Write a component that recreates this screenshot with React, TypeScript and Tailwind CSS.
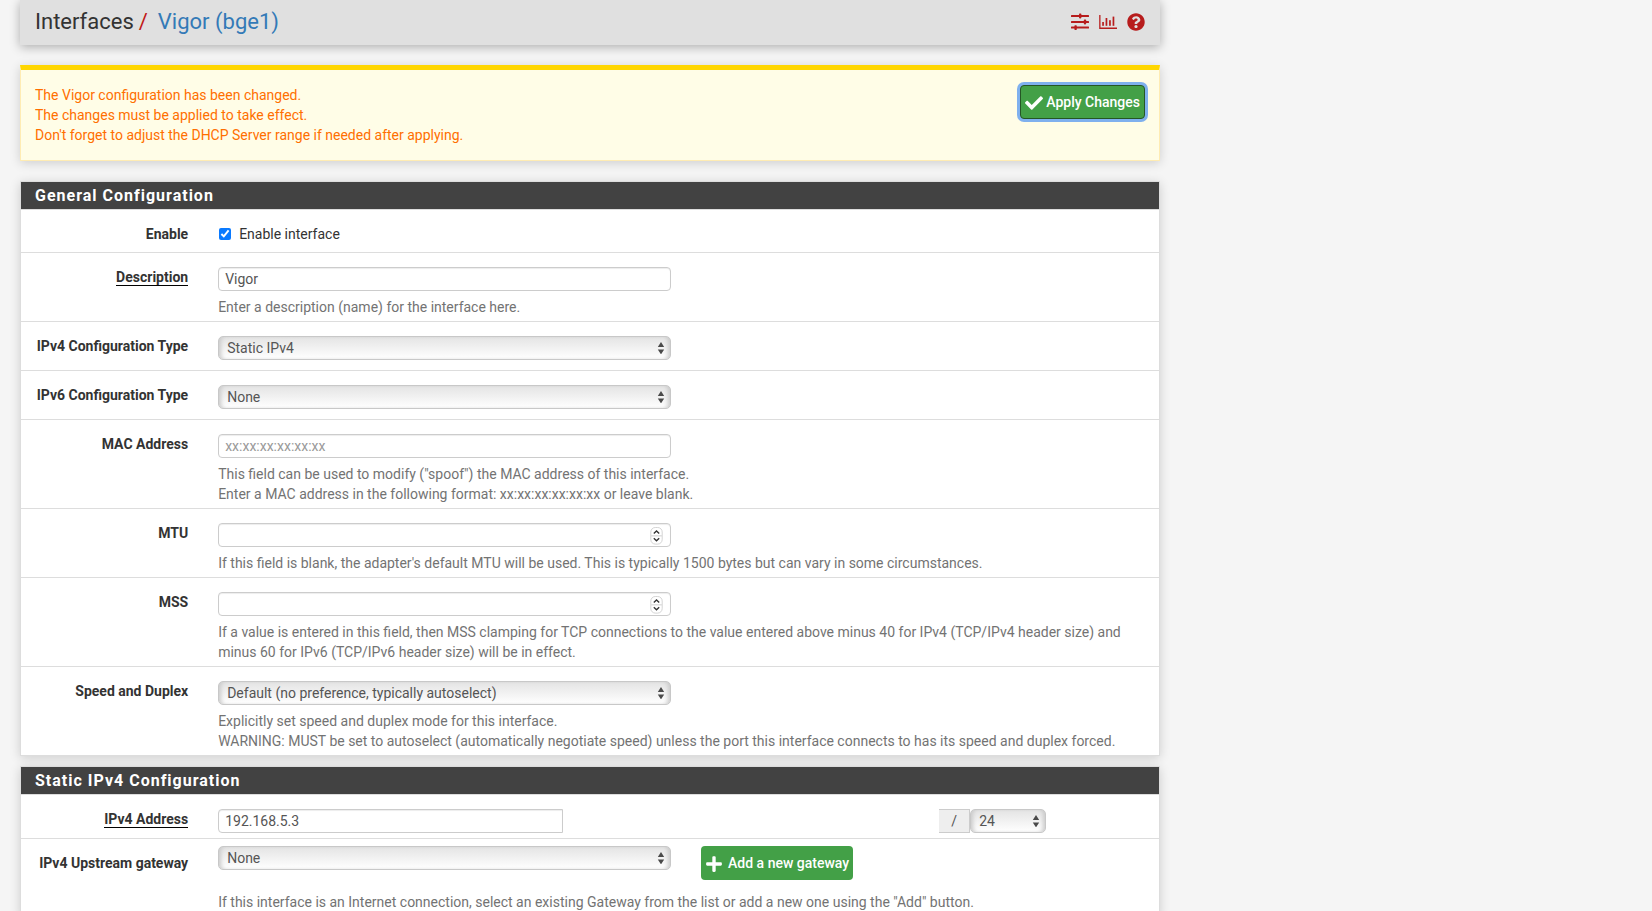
import React from 'react';
import { FaCheck, FaPlus, FaQuestionCircle } from 'react-icons/fa';

const SlidersIcon = () => (
  <svg width="18" height="18" viewBox="0 0 18 18" fill="currentColor" aria-hidden="true">
    <rect x="0" y="2" width="18" height="2" rx="0.5" />
    <rect x="8" y="0.6" width="2.4" height="4.8" rx="0.8" />
    <rect x="0" y="8" width="18" height="2" rx="0.5" />
    <rect x="12.8" y="6.6" width="2.4" height="4.8" rx="0.8" />
    <rect x="0" y="13.6" width="18" height="2" rx="0.5" />
    <rect x="3.4" y="12.2" width="2.4" height="4.8" rx="0.8" />
  </svg>
);

const ChartIcon = () => (
  <svg width="18" height="18" viewBox="0 0 18 18" fill="currentColor" aria-hidden="true">
    <path d="M0.2 2h1.3v12.6H18V16H0.2z" />
    <rect x="3.2" y="9" width="1.7" height="3.8" />
    <rect x="6.6" y="5" width="1.7" height="7.8" />
    <rect x="10.1" y="7.2" width="1.7" height="5.6" />
    <rect x="13.6" y="3.6" width="1.7" height="9.2" />
  </svg>
);

interface SelectBoxProps {
  id: string;
  options: string[];
  label?: string;
}

const SelectBox: React.FC<SelectBoxProps> = ({ id, options, label }) => (
  <div className="relative">
    <select
      id={id}
      aria-label={label}
      className="block h-6 w-full appearance-none rounded-[5px] border border-[#c8c8c8] bg-linear-to-b from-[#e4e4e4] to-white pl-2 pr-6 text-sm leading-5 text-[#555] shadow-[inset_4px_0_4px_-2px_#cacaca,inset_-4px_0_4px_-2px_#cacaca]"
    >
      {options.map((o) => (
        <option key={o}>{o}</option>
      ))}
    </select>
    <svg className="pointer-events-none absolute right-1.5 top-1.5" width="8" height="12" viewBox="0 0 8 12" fill="#4a4a4a" aria-hidden="true">
      <path d="M4 0l3.2 5H0.8zM4 12.4L0.8 7.4h6.4z" />
    </svg>
  </div>
);

const inputClass =
  'block h-6 w-full rounded border border-[#ccc] bg-white px-1.5 text-sm leading-5 text-[#555] shadow-[inset_0_1px_1px_rgba(0,0,0,0.075)] placeholder:text-[#999]';

const NumberBox: React.FC<{ id: string }> = ({ id }) => (
  <div className="relative">
    <input id={id} type="number" className={`${inputClass} [appearance:textfield]`} />
    <svg className="pointer-events-none absolute right-2 top-1" width="13" height="18" viewBox="0 0 13 18" fill="none" aria-hidden="true">
      <rect x="0.8" y="0.5" width="11.4" height="16.6" rx="4.5" fill="#fff" stroke="#c9c9c9" strokeWidth="0.8" />
      <path d="M1 8.8h11" stroke="#ddd" strokeWidth="1.4" />
      <path d="M3.8 6.5l2.7-2.5 2.7 2.5M3.8 11.2l2.7 2.5 2.7-2.5" stroke="#333" strokeWidth="1.4" />
    </svg>
  </div>
);

interface RowProps {
  label: string;
  htmlFor: string;
  required?: boolean;
  className?: string;
  children: React.ReactNode;
}

const Row: React.FC<RowProps> = ({ label, htmlFor, required, className, children }) => (
  <div className="border-t border-[#ddd]">
    <div className="-mr-2.5 -ml-[11px] grid grid-cols-12">
      <div className="col-span-2 px-[15px] pt-3.5 text-right">
        <label htmlFor={htmlFor} className="block font-bold text-[#333]">
          {required ? <span className="inline-block border-b border-black leading-4">{label}</span> : label}
        </label>
      </div>
      <div className={`col-span-10 ${className ?? 'pt-3.5 pb-1'}`}>{children}</div>
    </div>
  </div>
);

const Half: React.FC<{ children: React.ReactNode }> = ({ children }) => (
  <div className="w-1/2 px-[15px]">{children}</div>
);

const Help: React.FC<{ children: React.ReactNode }> = ({ children }) => (
  <p className="mt-1.5 px-[15px] text-[#737373]">{children}</p>
);

const Panel: React.FC<{ title: string; children: React.ReactNode }> = ({ title, children }) => (
  <section className="mb-2.5 overflow-hidden border border-[#ddd] bg-white shadow-[0_2px_10px_rgba(0,0,0,0.16)]">
    <h2 className="bg-[#424242] px-3.5 py-1 text-base leading-[19px] font-bold tracking-[1px] text-white">{title}</h2>
    {children}
  </section>
);

const App: React.FC = () => {
  return (
    <div className="h-screen overflow-hidden bg-[#f5f5f5] font-[Roboto,sans-serif] text-sm leading-5 text-[#333]">
      <div className="ml-5 max-w-[1140px]">
        <header className="mb-5 flex h-[45px] items-center justify-between bg-[#e0e0e0] px-[15px] pb-0.5 shadow-[0_2px_10px_rgba(0,0,0,0.3)]">
          <h1 className="flex text-[22px] leading-7">
            Interfaces
            <span className="ml-[5px] mr-2.5 text-[#c01818]">/</span>
            <a href="#vigor" className="text-[#337ab7]">Vigor (bge1)</a>
          </h1>
          <nav className="flex items-center gap-2.5 text-[#b71c1c]">
            <a href="#settings" aria-label="Settings"><SlidersIcon /></a>
            <a href="#status" aria-label="Status"><ChartIcon /></a>
            <a href="#help" aria-label="Help"><FaQuestionCircle size={18} /></a>
          </nav>
        </header>

        <div className="mb-5 flex items-start justify-between border border-t-[5px] border-[#ffecb3] border-t-[#ffd600] bg-[#fffde7] px-3.5 py-[15px] text-[#ff6f00] shadow-[0_2px_10px_rgba(0,0,0,0.16)]">
          <p>
            The Vigor configuration has been changed.<br />
            The changes must be applied to take effect.<br />
            Don't forget to adjust the DHCP Server range if needed after applying.
          </p>
          <button type="button" className="flex h-[34px] items-center gap-[3px] rounded border border-[#255625] bg-[#43a047] px-1 font-medium text-white ring-3 ring-[#7fb0ee]">
            <FaCheck size={18} className="mt-0.5" />
            Apply Changes
          </button>
        </div>

        <Panel title="General Configuration">
          <Row label="Enable" htmlFor="enable" className="px-[15px] pt-3.5 pb-2">
            <label className="flex items-center gap-2">
              <input id="enable" type="checkbox" defaultChecked className="ml-px size-3 accent-[#0a7aff]" />
              Enable interface
            </label>
          </Row>
          <Row label="Description" htmlFor="descr" required>
            <Half><input id="descr" type="text" defaultValue="Vigor" className={inputClass} /></Half>
            <Help>Enter a description (name) for the interface here.</Help>
          </Row>
          <Row label="IPv4 Configuration Type" htmlFor="type4" className="pt-3.5 pb-2.5">
            <Half><SelectBox id="type4" options={['Static IPv4']} /></Half>
          </Row>
          <Row label="IPv6 Configuration Type" htmlFor="type6" className="pt-3.5 pb-2.5">
            <Half><SelectBox id="type6" options={['None']} /></Half>
          </Row>
          <Row label="MAC Address" htmlFor="mac">
            <Half><input id="mac" type="text" placeholder="xx:xx:xx:xx:xx:xx" className={inputClass} /></Half>
            <Help>
              This field can be used to modify ("spoof") the MAC address of this interface.<br />
              Enter a MAC address in the following format: xx:xx:xx:xx:xx:xx or leave blank.
            </Help>
          </Row>
          <Row label="MTU" htmlFor="mtu">
            <Half><NumberBox id="mtu" /></Half>
            <Help>If this field is blank, the adapter's default MTU will be used. This is typically 1500 bytes but can vary in some circumstances.</Help>
          </Row>
          <Row label="MSS" htmlFor="mss">
            <Half><NumberBox id="mss" /></Half>
            <Help>
              If a value is entered in this field, then MSS clamping for TCP connections to the value entered above minus 40 for IPv4 (TCP/IPv4 header size) and
              minus 60 for IPv6 (TCP/IPv6 header size) will be in effect.
            </Help>
          </Row>
          <Row label="Speed and Duplex" htmlFor="media">
            <Half><SelectBox id="media" options={['Default (no preference, typically autoselect)']} /></Half>
            <Help>
              Explicitly set speed and duplex mode for this interface.<br />
              WARNING: MUST be set to autoselect (automatically negotiate speed) unless the port this interface connects to has its speed and duplex forced.
            </Help>
          </Row>
        </Panel>

        <Panel title="Static IPv4 Configuration">
          <Row label="IPv4 Address" htmlFor="ipaddr" required className="px-[15px] pt-3.5 pb-[5px]">
            <div className="flex max-w-[828px] justify-between">
              <div className="w-[345px]">
                <input id="ipaddr" type="text" defaultValue="192.168.5.3" className={`${inputClass} rounded-r-none`} />
              </div>
              <div className="flex">
                <span className="w-[31px] border border-l-0 border-[#ccc] bg-[#eee] text-center leading-[22px] text-[#555]">/</span>
                <div className="w-[76px]">
                  <SelectBox id="subnet" label="Subnet mask" options={['24']} />
                </div>
              </div>
            </div>
          </Row>
          <Row label="IPv4 Upstream gateway" htmlFor="gateway" className="pt-[7px] pb-1">
            <div className="mb-3 flex items-start">
              <Half><SelectBox id="gateway" options={['None']} /></Half>
              <button type="button" className="ml-[15px] flex h-[34px] items-center gap-[5px] rounded bg-[#43a047] px-1 font-medium text-white">
                <FaPlus size={18} className="mt-0.5" />
                Add a new gateway
              </button>
            </div>
            <p className="px-[15px] text-[#737373]">
              If this interface is an Internet connection, select an existing Gateway from the list or add a new one using the "Add" button.
            </p>
          </Row>
        </Panel>
      </div>
    </div>
  );
};

export default App;
